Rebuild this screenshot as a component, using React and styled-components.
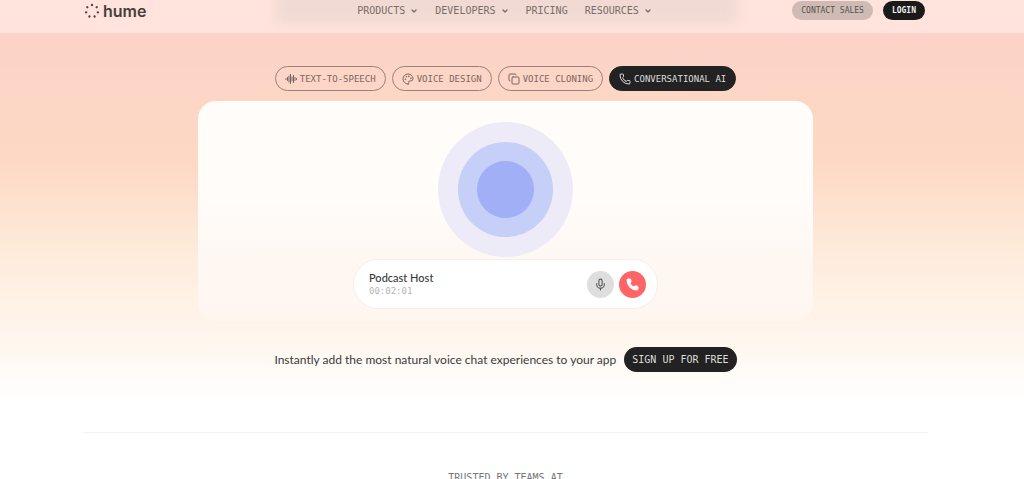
import React, { useState } from "react";
import styled, { createGlobalStyle } from "styled-components";
import { ChevronDown, Copy, Mic, Palette, Phone } from "lucide-react";

const mono = `"DejaVu Sans Mono", "Liberation Mono", monospace`;
const sans = `Lato, "Open Sans", sans-serif`;

const GlobalStyle = createGlobalStyle`
  * {
    box-sizing: border-box;
  }

  body {
    margin: 0;
    background: #fff;
    color: #3a3a3a;
    font-family: ${sans};
  }

  button {
    cursor: pointer;
  }
`;

const Page = styled.div`
  overflow: hidden;
`;

const Header = styled.header`
  position: relative;
  padding: 1px 13px 13px 0;
  background: #ffe3dc;
  overflow: hidden;
`;

const HeaderShade = styled.div`
  position: absolute;
  top: -20px;
  left: 27%;
  right: 28%;
  height: 43px;
  background: #f0dad3;
  filter: blur(6px);
`;

const HeaderInner = styled.div`
  position: relative;
  display: grid;
  grid-template-columns: 1fr auto 1fr;
  align-items: center;
  max-width: 845px;
  margin: 0 auto;
  padding: 0 3px 0 1px;
`;

const Logo = styled.a`
  display: flex;
  align-items: center;
  gap: 3px;
  color: #44403e;
  font-family: Inter, sans-serif;
  font-size: 16px;
  font-weight: 600;
  line-height: 16px;
  text-decoration: none;
`;

const Nav = styled.nav`
  display: flex;
  gap: 17px;
`;

const NavLink = styled.a`
  display: flex;
  align-items: center;
  gap: 5px;
  color: #7b6c68;
  font-family: ${mono};
  font-size: 10px;
  line-height: 12px;
  text-decoration: none;
`;

const HeaderActions = styled.div`
  display: flex;
  justify-content: flex-end;
  gap: 10px;
`;

const HeaderButton = styled.a`
  padding: 0 9px;
  border-radius: 10px;
  background: ${({ $dark }) => ($dark ? "#1a1a1a" : "#cfbbb5")};
  color: ${({ $dark }) => ($dark ? "#eee" : "#5b504d")};
  font-family: ${mono};
  font-size: 8px;
  font-weight: ${({ $dark }) => ($dark ? "bold" : "normal")};
  line-height: 19px;
  text-decoration: none;
`;

const Main = styled.main`
  padding-right: 13px;
  background: linear-gradient(
    #fcd2c8 0,
    #fcd3c7 25px,
    #fcd5c6 40px,
    #fdd8c4 125px,
    #fee0cd 165px,
    #fde9d8 210px,
    #fff0e3 255px,
    #fff5ec 300px,
    #fffbf7 340px,
    #fff 370px
  );
`;

const Section = styled.section`
  display: flex;
  flex-direction: column;
  align-items: center;
  padding: 33px 0 60px;
`;

const Tabs = styled.div`
  display: flex;
  gap: 6px;
  margin-bottom: 10px;
`;

const Tab = styled.button`
  display: flex;
  align-items: center;
  gap: 3px;
  height: 25px;
  padding: 0 9px;
  border: 1px solid ${({ $active }) => ($active ? "#222" : "#98817a")};
  border-radius: 13px;
  background: ${({ $active }) => ($active ? "#222" : "transparent")};
  color: ${({ $active }) => ($active ? "#ddd" : "#7b6660")};
  font-family: ${mono};
  font-size: 9px;
`;

const Card = styled.div`
  display: flex;
  flex-direction: column;
  align-items: center;
  width: 90%;
  max-width: 615px;
  padding: 21px 20px 12px;
  border-radius: 18px;
  background: linear-gradient(
    #fffcf9 0,
    #fffcf9 45%,
    #fef7f2 75%,
    #fff6f0 100%
  );
`;

const Ring = styled.div`
  display: flex;
  align-items: center;
  justify-content: center;
  width: ${({ $size }) => $size}px;
  height: ${({ $size }) => $size}px;
  border-radius: 50%;
  background: ${({ $color }) => $color};
`;

const CallBar = styled.div`
  display: flex;
  align-items: center;
  gap: 5px;
  width: 100%;
  max-width: 305px;
  height: 50px;
  margin-top: 2px;
  padding: 0 11px 0 15px;
  border: 1px solid #f3efed;
  border-radius: 25px;
  background: #fff;
`;

const CallInfo = styled.div`
  flex: 1;
`;

const CallName = styled.div`
  font-size: 11px;
  font-weight: 500;
  line-height: 14px;
`;

const CallTime = styled.div`
  color: #b5b5b5;
  font-family: ${mono};
  font-size: 9px;
  line-height: 12px;
`;

const RoundButton = styled.button`
  display: flex;
  align-items: center;
  justify-content: center;
  width: 27px;
  height: 27px;
  padding: 0;
  border: 0;
  border-radius: 50%;
  background: ${({ $danger }) => ($danger ? "#ff6467" : "#dedede")};
  color: ${({ $danger }) => ($danger ? "#fff" : "#555")};
`;

const SignUpRow = styled.div`
  display: flex;
  align-items: center;
  gap: 8px;
  margin-top: 26px;
`;

const SignUpText = styled.p`
  margin: 0;
  font-size: 12px;
  line-height: 16px;
`;

const SignUpButton = styled.a`
  padding: 0 8px;
  border-radius: 13px;
  background: #222;
  color: #ddd;
  font-family: ${mono};
  font-size: 10px;
  line-height: 25px;
  text-decoration: none;
`;

const Trusted = styled.div`
  max-width: 845px;
  margin: 0 auto;
  padding-top: 39px;
  border-top: 1px solid #f2f2f2;
  background: #fff;
  color: #777;
  font-family: ${mono};
  font-size: 10px;
  line-height: 12px;
  text-align: center;
`;

const navItems = [
  { label: "PRODUCTS", hasMenu: true },
  { label: "DEVELOPERS", hasMenu: true },
  { label: "PRICING" },
  { label: "RESOURCES", hasMenu: true },
];

const tabs = [
  { label: "TEXT-TO-SPEECH", Icon: WaveIcon },
  { label: "VOICE DESIGN", Icon: Palette },
  { label: "VOICE CLONING", Icon: Copy },
  { label: "CONVERSATIONAL AI", Icon: Phone },
];

function WaveIcon({ size, strokeWidth }) {
  return (
    <svg
      width={size}
      height={size}
      viewBox="0 0 24 24"
      fill="none"
      stroke="currentColor"
      strokeWidth={strokeWidth}
      strokeLinecap="round"
    >
      <path d="M2 11v2M5 9v6M8 6v12M11 3v18M14 8v8M17 5v14M20 9v6M23 11v2" />
    </svg>
  );
}

function LogoMark() {
  // seven dots evenly spaced round a circle
  return (
    <svg width="16" height="16" viewBox="0 0 16 16" fill="currentColor">
      {[0, 1, 2, 3, 4, 5, 6].map((i) => (
        <ellipse
          key={i}
          cx="8"
          cy="2"
          rx="1.1"
          ry="1.2"
          transform={`rotate(${(i * 360) / 7} 8 8)`}
        />
      ))}
    </svg>
  );
}

function App() {
  const [activeTab, setActiveTab] = useState("CONVERSATIONAL AI");

  return (
    <Page>
      <GlobalStyle />
      <Header>
        <HeaderShade />
        <HeaderInner>
          <Logo href="#">
            <LogoMark />
            hume
          </Logo>
          <Nav>
            {navItems.map(({ label, hasMenu }) => (
              <NavLink key={label} href="#">
                {label}
                {hasMenu && <ChevronDown size={8} strokeWidth={4} />}
              </NavLink>
            ))}
          </Nav>
          <HeaderActions>
            <HeaderButton href="#">CONTACT SALES</HeaderButton>
            <HeaderButton href="#" $dark>
              LOGIN
            </HeaderButton>
          </HeaderActions>
        </HeaderInner>
      </Header>
      <Main>
        <Section>
          <Tabs>
            {tabs.map(({ label, Icon }) => (
              <Tab
                key={label}
                type="button"
                $active={label === activeTab}
                onClick={() => setActiveTab(label)}
              >
                <Icon size={12} strokeWidth={2} />
                {label}
              </Tab>
            ))}
          </Tabs>
          <Card>
            <Ring $size={135} $color="#ecebf7">
              <Ring $size={95} $color="#c5cff8">
                <Ring $size={57} $color="#a0aff6" />
              </Ring>
            </Ring>
            <CallBar>
              <CallInfo>
                <CallName>Podcast Host</CallName>
                <CallTime>00:02:01</CallTime>
              </CallInfo>
              <RoundButton type="button" aria-label="Mute">
                <Mic size={13} strokeWidth={2} />
              </RoundButton>
              <RoundButton type="button" aria-label="End call" $danger>
                <Phone size={13} fill="currentColor" strokeWidth={2} />
              </RoundButton>
            </CallBar>
          </Card>
          <SignUpRow>
            <SignUpText>
              Instantly add the most natural voice chat experiences to your app
            </SignUpText>
            <SignUpButton href="#">SIGN UP FOR FREE</SignUpButton>
          </SignUpRow>
        </Section>
        <Trusted>TRUSTED BY TEAMS AT</Trusted>
      </Main>
    </Page>
  );
}

export default App;
